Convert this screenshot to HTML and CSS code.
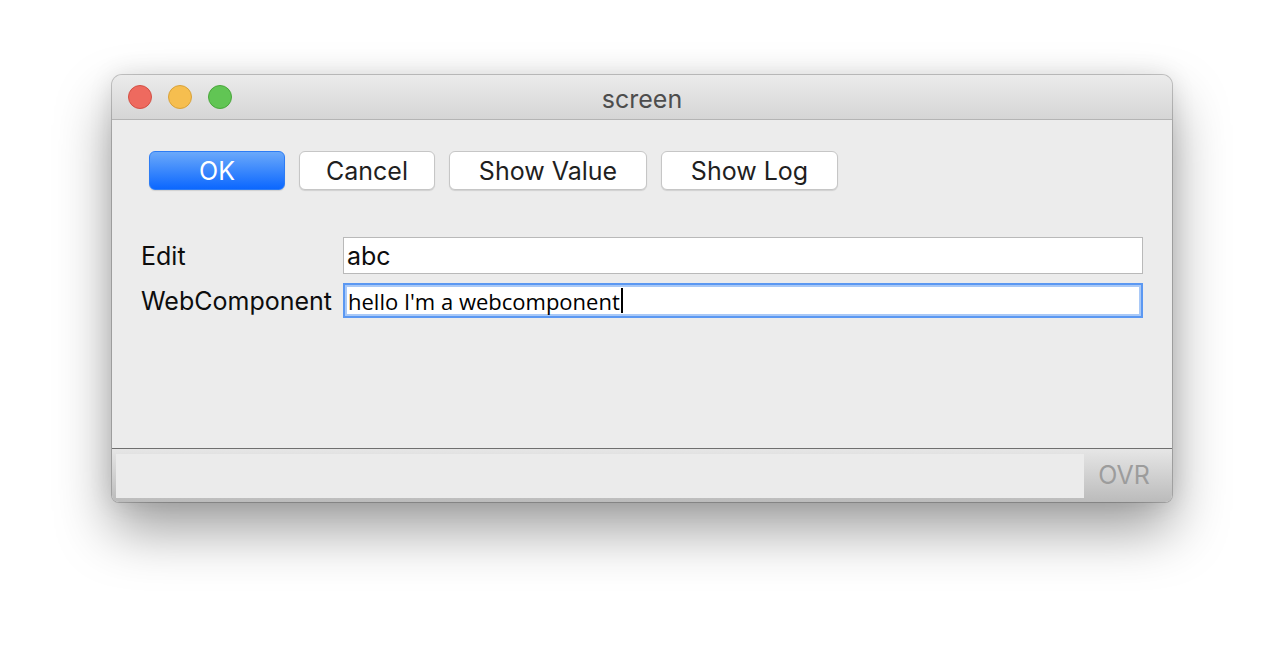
FILE: index.html
```html
<!DOCTYPE html>
<html>
<head>
<meta charset="utf-8">
<link rel="stylesheet" href="styles.css">
</head>
<body>
<div class="window">
  <div class="titlebar">
    <div class="lights">
      <span class="light red"></span>
      <span class="light yellow"></span>
      <span class="light green"></span>
    </div>
    <div class="title">screen</div>
  </div>
  <div class="content">
    <div class="buttons">
      <button class="btn primary">OK</button>
      <button class="btn w-cancel">Cancel</button>
      <button class="btn w-value">Show Value</button>
      <button class="btn w-log">Show Log</button>
    </div>
    <div class="form">
      <div class="row">
        <label class="lbl">Edit</label>
        <div class="input plain">abc</div>
      </div>
      <div class="row">
        <label class="lbl">WebComponent</label>
        <div class="input focus"><span class="wctext">hello I'm a webcomponent</span><span class="caret"></span></div>
      </div>
    </div>
  </div>
  <div class="statusbar">
    <div class="statusfield"></div>
    <div class="ovr">OVR</div>
  </div>
</div>
</body>
</html>
```

FILE: styles.css
```css
html, body {
  margin: 0;
  padding: 0;
  background: #ffffff;
}
html {
  height: 100%;
  overflow: hidden;
}
body {
  height: 100%;
  box-sizing: border-box;
  padding: 75px 0 0 112px;
  font-family: "Inter", "Liberation Sans", sans-serif;
}
.window {
  width: 1060px;
  height: 427px;
  display: flex;
  flex-direction: column;
  border-radius: 10px 10px 7px 7px;
  background: #ececec;
  box-shadow: 0 0 0 1px rgba(0,0,0,0.2), 0 28px 55px rgba(0,0,0,0.38), 0 0 25px rgba(0,0,0,0.1);
  overflow: hidden;
}
.titlebar {
  height: 44px;
  flex: none;
  display: flex;
  align-items: center;
  position: relative;
  background: linear-gradient(#ebebeb, #d5d5d5);
  border-bottom: 1px solid #b4b4b4;
}
.lights {
  display: flex;
  gap: 16px;
  padding-left: 16px;
}
.light {
  width: 24px;
  height: 24px;
  border-radius: 50%;
  box-sizing: border-box;
}
.red { background: #ee6a5f; border: 1px solid #d25045; }
.yellow { background: #f6be4f; border: 1px solid #d8a23a; }
.green { background: #61c554; border: 1px solid #4aa63c; }
.title {
  position: absolute;
  left: 0;
  right: 0;
  top: 10px;
  text-align: center;
  font-size: 25px;
  line-height: 28px;
  color: #4d4d4d;
  pointer-events: none;
}
.content {
  flex: 1;
  background: #ececec;
  border-bottom: 1px solid #6f6f6f;
}
.buttons {
  display: flex;
  gap: 14px;
  padding: 31px 0 0 37px;
}
.btn {
  height: 39px;
  box-sizing: border-box;
  border-radius: 6px;
  border: 1px solid #c6c6c6;
  background: #ffffff;
  font-family: "Inter", "Liberation Sans", sans-serif;
  font-size: 25px;
  color: #1f1f1f;
  padding: 0;
  box-shadow: 0 1px 1px rgba(0,0,0,0.12);
}
.primary {
  width: 136px;
  color: #ffffff;
  border: 1px solid #2d7cf4;
  background: linear-gradient(#6ba9fa, #0b67ff);
}
.w-cancel { width: 136px; }
.w-value { width: 198px; }
.w-log { width: 177px; }
.form {
  padding: 47px 29px 0 29px;
  display: flex;
  flex-direction: column;
  gap: 10px;
}
.row {
  display: flex;
  align-items: center;
}
.lbl {
  width: 202px;
  flex: none;
  font-size: 25px;
  color: #0d0d0d;
  white-space: nowrap;
}
.input {
  flex: 1;
  box-sizing: border-box;
  background: #ffffff;
  display: flex;
  align-items: center;
}
.plain {
  height: 37px;
  border: 1px solid #b9b9b9;
  padding-left: 3px;
  font-size: 25px;
  color: #0d0d0d;
}
.focus {
  height: 35px;
  border: 2px solid #5b98f2;
  box-shadow: inset 0 0 0 2px #a9c9f7;
  padding-left: 3px;
  margin-top: -1px;
}
.wctext {
  font-family: "Open Sans", "Noto Sans", sans-serif;
  font-size: 22px;
  color: #000;
}
.caret {
  width: 2px;
  height: 25px;
  background: #000;
  margin-left: 1px;
}
.statusbar {
  height: 53px;
  flex: none;
  display: flex;
  background: linear-gradient(#e6e6e6, #bbbbbb);
}
.statusfield {
  width: 968px;
  margin: 5px 0 4px 4px;
  background: #ebebeb;
}
.ovr {
  flex: 1;
  display: flex;
  align-items: center;
  justify-content: center;
  font-size: 25px;
  color: #9c9c9c;
  padding: 0 8px 2px 0;
}
```
